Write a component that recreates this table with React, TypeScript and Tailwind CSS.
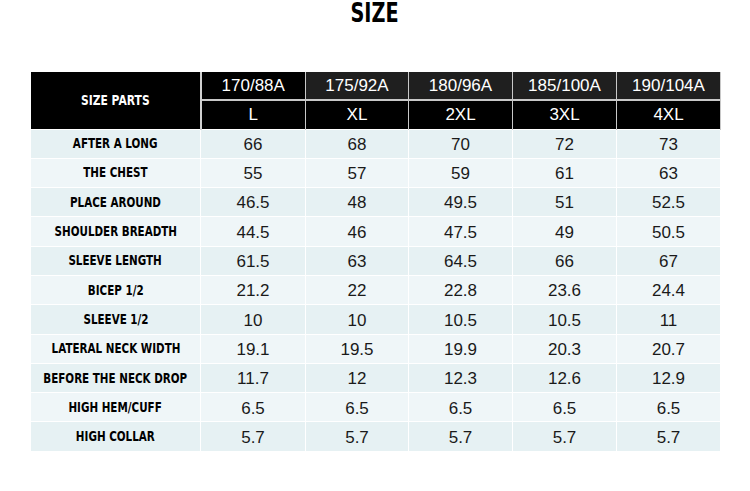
const sizes = [
  { code: "170/88A", label: "L" },
  { code: "175/92A", label: "XL" },
  { code: "180/96A", label: "2XL" },
  { code: "185/100A", label: "3XL" },
  { code: "190/104A", label: "4XL" },
];

const rows: [string, string[]][] = [
  ["AFTER A LONG", ["66", "68", "70", "72", "73"]],
  ["THE CHEST", ["55", "57", "59", "61", "63"]],
  ["PLACE AROUND", ["46.5", "48", "49.5", "51", "52.5"]],
  ["SHOULDER BREADTH", ["44.5", "46", "47.5", "49", "50.5"]],
  ["SLEEVE LENGTH", ["61.5", "63", "64.5", "66", "67"]],
  ["BICEP 1/2", ["21.2", "22", "22.8", "23.6", "24.4"]],
  ["SLEEVE 1/2", ["10", "10", "10.5", "10.5", "11"]],
  ["LATERAL NECK WIDTH", ["19.1", "19.5", "19.9", "20.3", "20.7"]],
  ["BEFORE THE NECK DROP", ["11.7", "12", "12.3", "12.6", "12.9"]],
  ["HIGH HEM/CUFF", ["6.5", "6.5", "6.5", "6.5", "6.5"]],
  ["HIGH COLLAR", ["5.7", "5.7", "5.7", "5.7", "5.7"]],
];

// condensed heading face, squeezed horizontally
const condensed = "font-['DejaVu_Sans',sans-serif] font-bold whitespace-nowrap scale-x-[0.74]";
const plain = "font-['Liberation_Sans',Arial,sans-serif]";

export default function App() {
  return (
    <div className="w-[750px] h-[491px] bg-white overflow-hidden">
      <div className="flex justify-center h-[27px]">
        <span className={`${condensed} scale-x-[0.7] text-[26px] leading-[27px] text-black`}>SIZE</span>
      </div>

      <table className="mt-[45px] ml-[30px] w-[690px] border-collapse table-fixed">
        <colgroup>
          <col className="w-[170px]" />
          <col className="w-[105px]" />
          <col className="w-[103px]" />
          <col className="w-[104px]" />
          <col className="w-[104px]" />
          <col className="w-[104px]" />
        </colgroup>
        <thead>
          <tr className="h-[28px]">
            <th rowSpan={2} className="bg-black border-r-2 border-[#d0d0d0] pt-[1px]">
              <div className="flex justify-center">
                <span className={`${condensed} text-white text-[14.5px]`}>SIZE PARTS</span>
              </div>
            </th>
            {sizes.map((s, i) => (
              <th
                key={s.code}
                className={`${plain} font-normal text-white text-[17px] border-x border-b-2 border-[#c8c8c8] ${
                  i === 0 ? "bg-black" : "bg-[#1f1f1f]"
                }`}
              >
                {s.code}
              </th>
            ))}
          </tr>
          <tr className="h-[29px]">
            {sizes.map((s) => (
              <th
                key={s.label}
                className={`${plain} font-normal text-white text-[17px] bg-black border-x border-[#c8c8c8]`}
              >
                {s.label}
              </th>
            ))}
          </tr>
        </thead>
        <tbody>
          {rows.map(([name, vals], r) => (
            <tr
              key={name}
              className={`h-[29.3px] ${r % 2 === 0 ? "bg-[#e6f1f3]" : "bg-[#eff6f8]"}`}
            >
              <td className="border border-white">
                <div className="flex justify-center">
                  <span className={`${condensed} text-[14px] text-black`}>{name}</span>
                </div>
              </td>
              {vals.map((v, i) => (
                <td
                  key={i}
                  className={`${plain} text-[17px] text-[#1a1a1a] text-center border border-white pt-[2px]`}
                >
                  {v}
                </td>
              ))}
            </tr>
          ))}
        </tbody>
      </table>
    </div>
  );
}
